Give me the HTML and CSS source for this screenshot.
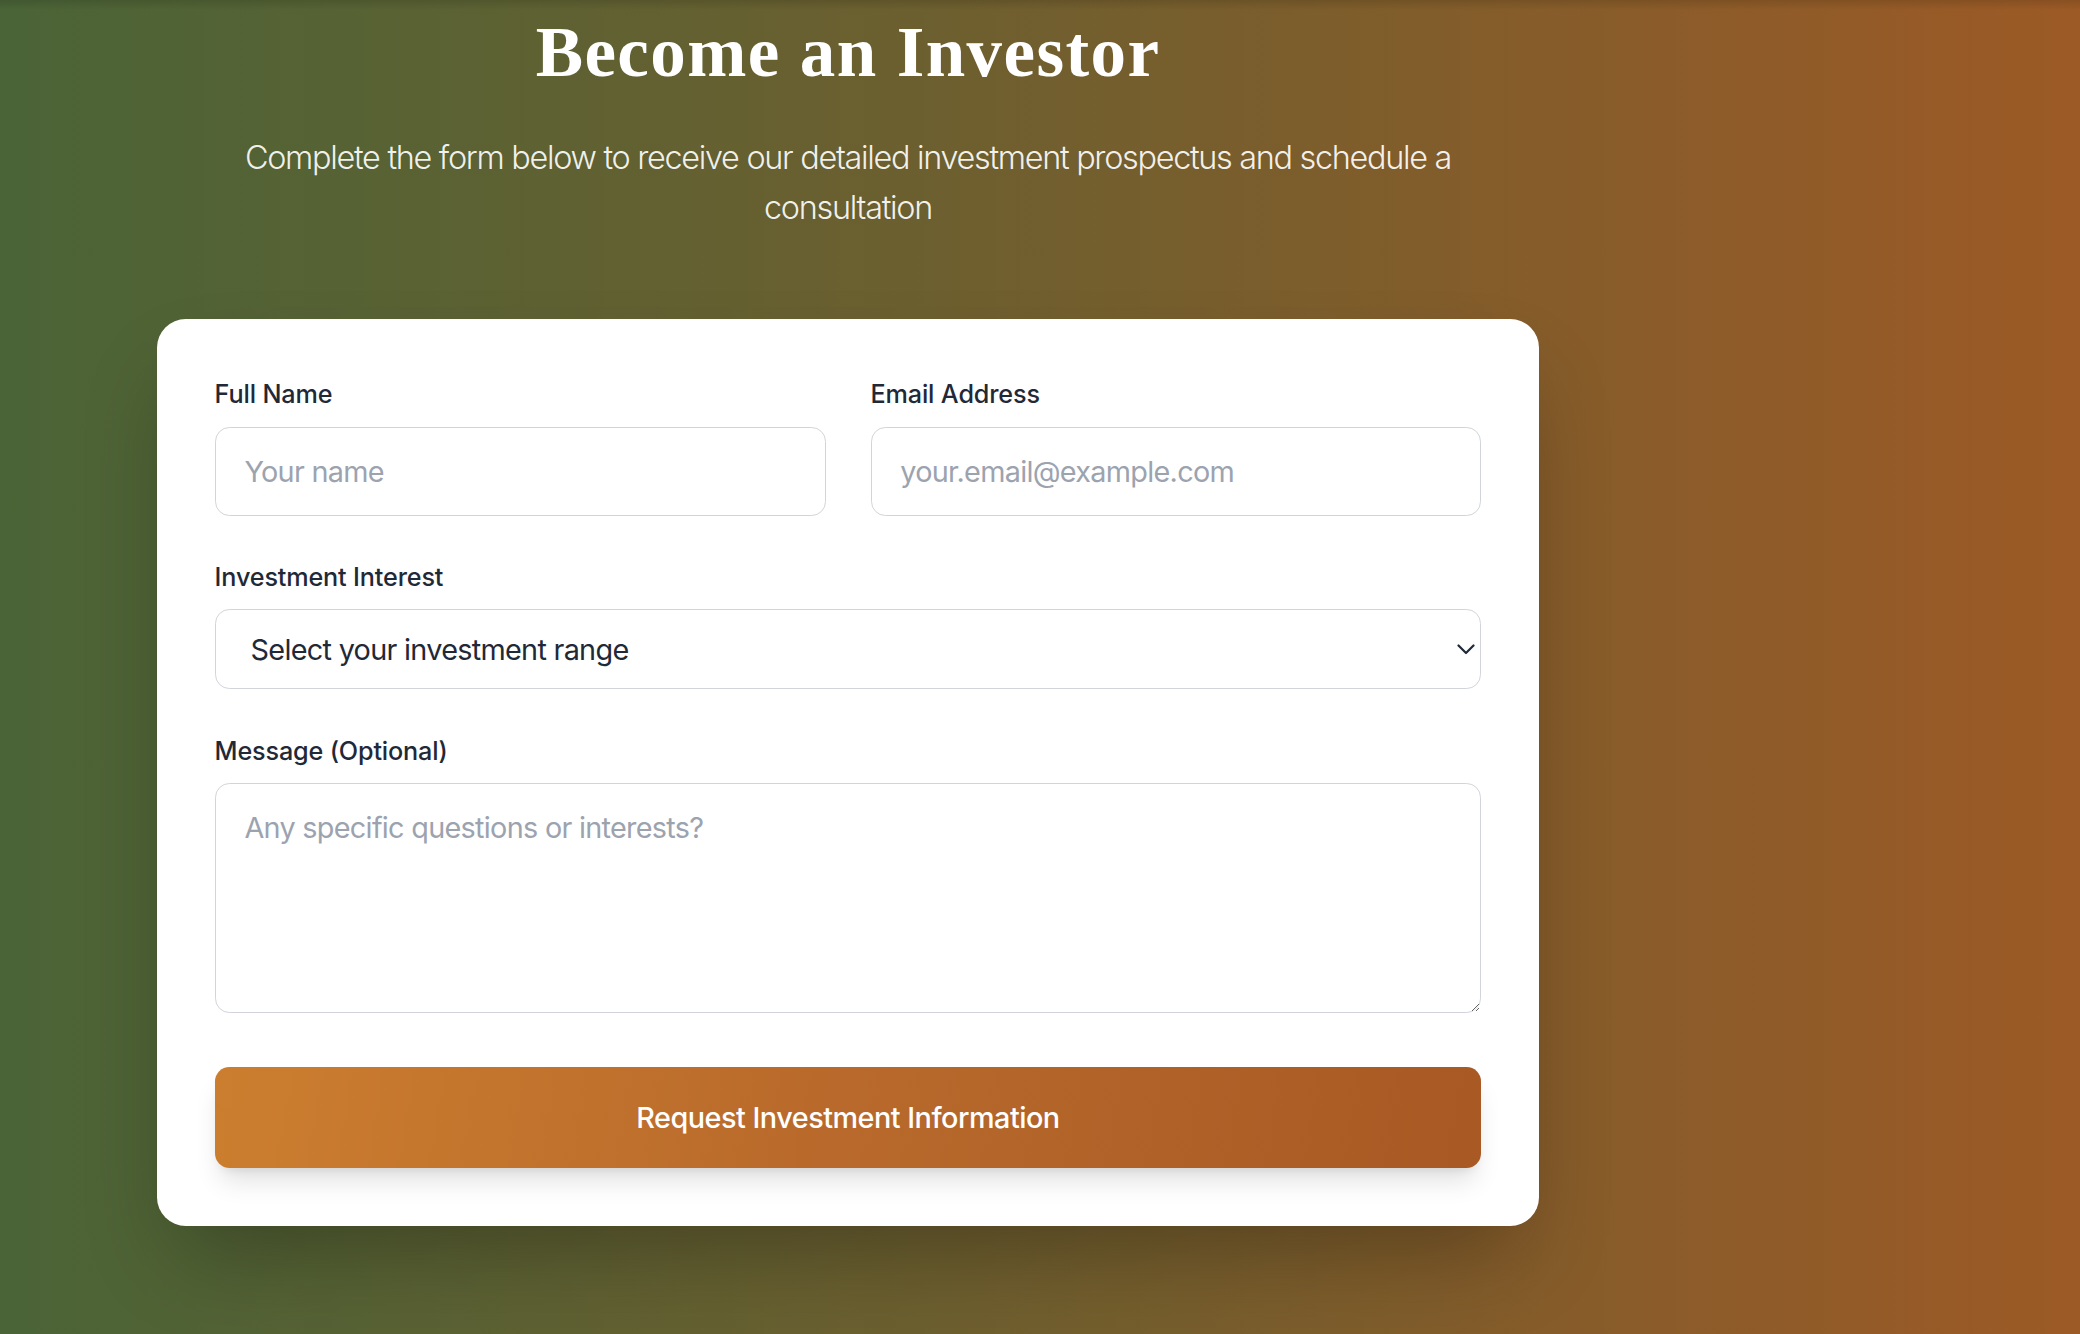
FILE: index.html
```html
<!DOCTYPE html>
<html lang="en">
<head>
<meta charset="utf-8">
<title>Become an Investor</title>
<link rel="stylesheet" href="styles.css">
</head>
<body>
<main class="page">
  <section class="column">
    <h1 class="title">Become an Investor</h1>
    <p class="subtitle">Complete the form below to receive our detailed investment prospectus and schedule a consultation</p>
    <form class="card">
      <div class="row-two">
        <div class="field">
          <label class="label" for="name">Full Name</label>
          <input class="input" id="name" type="text" placeholder="Your name">
        </div>
        <div class="field">
          <label class="label" for="email">Email Address</label>
          <input class="input" id="email" type="email" placeholder="your.email@example.com">
        </div>
      </div>
      <div class="field">
        <label class="label" for="range">Investment Interest</label>
        <div class="select-wrap">
          <select class="select" id="range">
            <option>Select your investment range</option>
            <option>$10,000 - $50,000</option>
            <option>$50,000 - $250,000</option>
            <option>$250,000+</option>
          </select>
          <svg class="chevron" width="18" height="11" viewBox="0 0 18 11" aria-hidden="true"><path d="M1.5 1.5 L9 9 L16.5 1.5" fill="none" stroke="#1f2937" stroke-width="2.2" stroke-linecap="round" stroke-linejoin="round"/></svg>
        </div>
      </div>
      <div class="field">
        <label class="label" for="msg">Message (Optional)</label>
        <textarea class="textarea" id="msg" placeholder="Any specific questions or interests?"></textarea>
      </div>
      <div class="actions">
        <button class="button" type="button">Request Investment Information</button>
      </div>
    </form>
  </section>
</main>
</body>
</html>
```
FILE: styles.css
```css
* { box-sizing: border-box; }
html, body { margin: 0; padding: 0; }
body {
  font-family: Inter, "Noto Sans", sans-serif;
  background: #6f5e2f;
}
.page {
  min-height: 1334px;
  background:
    linear-gradient(to bottom, rgba(0,0,0,0.12), rgba(0,0,0,0) 10px),
    linear-gradient(to right, #4a6437 0%, #6d5f2f 45%, #9c5a26 100%);
  padding: 16px 0 0 157px;
}
.column {
  width: 1382px;
  display: flex;
  flex-direction: column;
  align-items: stretch;
}
.title {
  margin: 0;
  font-family: "Liberation Serif", "Times New Roman", serif;
  font-weight: 700;
  font-size: 71px;
  line-height: 72px;
  letter-spacing: 1.4px;
  color: #ffffff;
  text-align: center;
}
.subtitle {
  margin: 45px auto 0;
  width: 1250px;
  font-family: Inter, sans-serif;
  font-weight: 300;
  font-size: 32.4px;
  line-height: 50.4px;
  letter-spacing: -1.3px;
  color: rgba(255,255,255,0.92);
  text-align: center;
}
.card {
  margin-top: 85px;
  background: #ffffff;
  border-radius: 28.8px;
  padding: 57.6px;
  box-shadow: 0 45px 90px -21.6px rgba(0,0,0,0.3);
  display: flex;
  flex-direction: column;
  gap: 43.2px;
}
.row-two {
  display: grid;
  grid-template-columns: 1fr 1fr;
  gap: 45px;
}
.field {
  display: flex;
  flex-direction: column;
}
.label {
  font-size: 25.2px;
  line-height: 36px;
  font-weight: 500;
  letter-spacing: -0.15px;
  color: #1f2937;
  margin-bottom: 14.4px;
}
.input, .select, .textarea {
  width: 100%;
  font-family: Inter, sans-serif;
  font-size: 28.8px;
  letter-spacing: -0.7px;
  border: 1.8px solid #d1d5db;
  border-radius: 14.4px;
  background: #ffffff;
  color: #1f2937;
  outline: none;
}
.input {
  height: 89px;
  padding: 0 28.8px;
}
.input::placeholder, .textarea::placeholder { color: #9ca3af; opacity: 1; }
.select-wrap { position: relative; }
.select {
  -webkit-appearance: none;
  appearance: none;
  height: 80px;
  padding: 0 60px 0 35px;
  line-height: 43.2px;
}
.chevron {
  position: absolute;
  right: 6px;
  top: 35px;
  pointer-events: none;
}
.textarea {
  height: 230px;
  padding: 21.6px 28.8px;
  line-height: 43.2px;
  resize: vertical;
}
.actions { padding-top: 11px; }
.button {
  width: 100%;
  height: 101px;
  border: 0;
  border-radius: 14.4px;
  background: linear-gradient(100deg, #cc7e2f 0%, #b8692b 50%, #a85924 100%);
  color: #ffffff;
  font-family: Inter, sans-serif;
  font-size: 28.8px;
  font-weight: 500;
  letter-spacing: -0.5px;
  box-shadow: 0 18px 27px -5.4px rgba(0,0,0,0.12), 0 7.2px 10.8px -7.2px rgba(0,0,0,0.12);
  cursor: pointer;
}
```
